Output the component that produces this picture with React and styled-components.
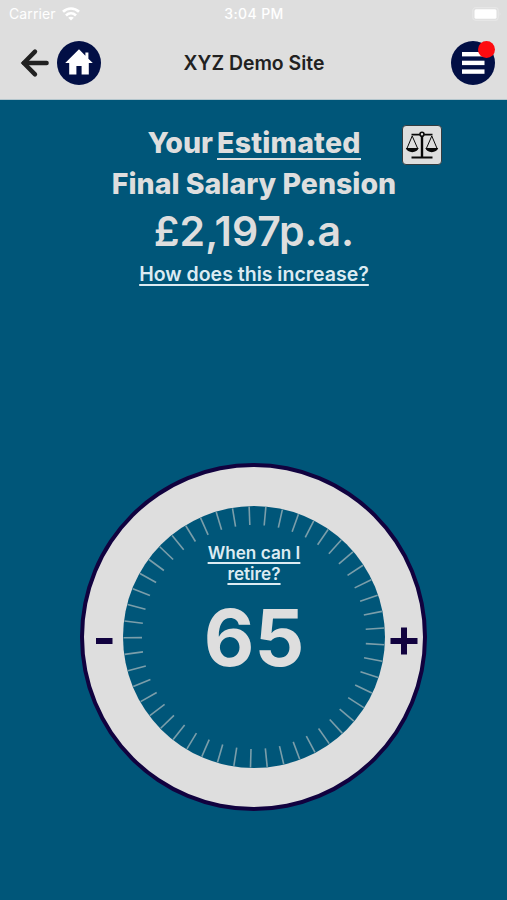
import React from 'react';
import styled, { createGlobalStyle } from 'styled-components';

const GlobalStyle = createGlobalStyle`
  body {
    margin: 0;
    background: #005679;
  }
  * {
    box-sizing: border-box;
  }
`;

const Screen = styled.div`
  display: flex;
  flex-direction: column;
  width: 507px;
  height: 900px;
  overflow: hidden;
  background: #005679;
  color: #dedede;
  font-family: Inter, 'Liberation Sans', sans-serif;
`;

const Header = styled.header`
  height: 100px;
  background: #dedede;
  border-bottom: 1px solid #b4c6cd;
`;

const StatusBar = styled.div`
  display: grid;
  grid-template-columns: 1fr auto 1fr;
  align-items: center;
  height: 27px;
  padding: 0 5px 0 9px;
  color: #fff;
  font-size: 14px;
`;

const Carrier = styled.div`
  display: flex;
  align-items: center;
  gap: 6px;
  letter-spacing: 0.1px;
`;

const Clock = styled.div`
  margin-right: 3px;
  font-weight: 500;
  font-size: 14px;
  letter-spacing: 0.4px;
`;

const Battery = styled.div`
  justify-self: end;
  height: 14px;
`;

const NavBar = styled.div`
  display: grid;
  grid-template-columns: 1fr auto 1fr;
  align-items: center;
  height: 72px;
  padding: 0 12px 0 13px;
`;

const NavLeft = styled.div`
  display: flex;
  align-items: center;
  gap: 7px;
  height: 44px;
  padding-left: 7px;
`;

const SiteTitle = styled.h1`
  margin: 0;
  color: #212121;
  font-size: 19.4px;
  font-weight: 600;
  white-space: nowrap;
`;

const RoundButton = styled.div`
  position: relative;
  display: flex;
  align-items: center;
  justify-content: center;
  width: 44px;
  height: 44px;
  border-radius: 50%;
  background: #020f45;
  justify-self: end;
`;

const Badge = styled.span`
  position: absolute;
  top: 0;
  right: 0;
  width: 17px;
  height: 17px;
  border-radius: 50%;
  background: #fe0b10;
`;

const Summary = styled.section`
  position: relative;
  display: flex;
  flex-direction: column;
  align-items: center;
  height: 363px;
  padding: 22px 0 0 1px;
`;

const Heading = styled.div`
  font-size: 28.5px;
  font-weight: 800;
  line-height: 41px;
  white-space: nowrap;
`;

const Underlined = styled.span`
  display: inline-block;
  margin-left: 4px;
  line-height: 31px;
  letter-spacing: 0.2px;
  border-bottom: 2.5px solid #dedede;
`;

const Amount = styled.div`
  font-size: 41px;
  font-weight: 600;
  line-height: 55px;
  white-space: nowrap;
`;

const Link = styled.a`
  font-size: ${props => props.$size}px;
  font-weight: 600;
  line-height: ${props => props.$line}px;
  color: #dcebf2;
  text-align: center;
  text-decoration: underline;
  text-decoration-thickness: 1.5px;
  text-underline-offset: 3px;
  text-decoration-skip-ink: none;
  white-space: nowrap;
`;

const CompareButton = styled.div`
  position: absolute;
  top: 25px;
  left: 402px;
  display: flex;
  align-items: center;
  justify-content: center;
  width: 40px;
  height: 40px;
  border: 1px solid #333c40;
  border-radius: 4px;
  background: #dedede;
`;

const Dial = styled.div`
  display: grid;
  grid-template-columns: 39px 262px 38px;
  align-items: center;
  align-self: center;
  width: 347px;
  height: 348px;
  border: 4px solid #11023f;
  border-radius: 50%;
  background: #dedede;
`;

const DialFace = styled.div`
  position: relative;
  display: flex;
  flex-direction: column;
  align-items: center;
  width: 262px;
  height: 262px;
  padding-top: 37px;
  border-radius: 50%;
  background: #005679;
`;

const Ticks = styled.svg`
  position: absolute;
  top: 0;
  left: 0;
`;

const Age = styled.div`
  margin-top: 8px;
  font-size: 78px;
  font-weight: 700;
  line-height: 92px;
`;

const Step = styled.div`
  display: flex;
  justify-content: center;
  padding-top: 7px;
`;

const TICK_COUNT = 49;

const WifiIcon = () => (
  <svg width="18" height="14" viewBox="0 0 18 14" fill="none" stroke="#fff" strokeWidth="2.7">
    <path d="M1 4.8C5.6 0.4 12.4 0.4 17 4.8" />
    <path d="M4 8.4C7 5.6 11 5.6 14 8.4" />
    <path d="M9 13.5L6.2 10.7C7.8 9.3 10.2 9.3 11.8 10.7Z" fill="#fff" stroke="none" />
  </svg>
);

const BatteryIcon = () => (
  <svg width="30" height="14" viewBox="0 0 30 14">
    <rect x="0.7" y="0.7" width="25.5" height="12.6" rx="3" fill="none" stroke="#e6e6e6" strokeWidth="1.2" />
    <rect x="2.5" y="2.2" width="22" height="9.6" rx="1.5" fill="#fff" />
    <path d="M27.7 4.8Q29.2 7 27.7 9.2Z" fill="#e9e9e9" />
  </svg>
);

const BackIcon = () => (
  <svg width="30" height="30" viewBox="0 0 30 30" fill="none" stroke="#212121" strokeWidth="4.4" strokeLinecap="round">
    <path d="M4 15H26.6" />
    <path d="M15 3.6L3.8 15L15 26.4" strokeLinejoin="miter" />
  </svg>
);

const HomeIcon = () => (
  <svg width="28" height="28" viewBox="0 0 28 28" fill="#fff">
    <path d="M14 0.2L0.2 14H4.2V25.4H11.4V17H16.6V25.4H23.8V14H27.8L23.4 9.8V3.6H20.4V6.7Z" />
  </svg>
);

const MenuIcon = () => (
  <svg width="23" height="22" viewBox="0 0 23 22" fill="#fff">
    <rect y="0" width="22.5" height="4.4" />
    <rect y="8.7" width="22.5" height="4.4" />
    <rect y="17.4" width="22.5" height="4.4" />
  </svg>
);

const ScalesIcon = () => (
  <svg width="34" height="30" viewBox="0 0 34 30" fill="none" stroke="#080808">
    <path d="M6.5 4.6H14.8M19.2 4.6H27.5" strokeWidth="1.8" />
    <circle cx="17" cy="4.2" r="2" strokeWidth="1.6" />
    <path d="M17 6.5V27.5" strokeWidth="2.4" />
    <path d="M6.5 27.5H27.5" strokeWidth="2" />
    <path d="M1.8 18.8L7.2 6L12.8 18.8M21.2 18.8L26.8 6L32.2 18.8" strokeWidth="1" />
    <path d="M0.8 18H13.6C12.5 23.5 2 23.5 0.8 18ZM20.4 18H33.2C32 23.5 21.5 23.5 20.4 18Z" fill="#080808" stroke="none" />
  </svg>
);

const MinusIcon = () => (
  <svg width="18" height="6" viewBox="0 0 18 6">
    <rect x="1" width="16.5" height="6" fill="#11023f" />
  </svg>
);

const PlusIcon = () => (
  <svg width="28" height="28" viewBox="0 0 28 28" fill="none" stroke="#11023f" strokeWidth="6">
    <path d="M0.5 14H27.5M14 0.5V27.5" />
  </svg>
);

const DialTicks = () => (
  <Ticks width="262" height="262" viewBox="0 0 262 262">
    {Array.from({ length: TICK_COUNT }, (_, i) => (
      <line
        key={i}
        x1="0.5"
        y1="131"
        x2="19"
        y2="131"
        stroke="#7b9eaa"
        strokeWidth="1.6"
        transform={`rotate(${(i * 360) / TICK_COUNT - 0.3} 131 131)`}
      />
    ))}
  </Ticks>
);

const App = () => (
  <Screen>
    <GlobalStyle />
    <Header>
      <StatusBar>
        <Carrier>
          Carrier
          <WifiIcon />
        </Carrier>
        <Clock>3:04 PM</Clock>
        <Battery>
          <BatteryIcon />
        </Battery>
      </StatusBar>
      <NavBar>
        <NavLeft>
          <BackIcon />
          <RoundButton>
            <HomeIcon />
          </RoundButton>
        </NavLeft>
        <SiteTitle>XYZ Demo Site</SiteTitle>
        <RoundButton>
          <MenuIcon />
          <Badge />
        </RoundButton>
      </NavBar>
    </Header>
    <Summary>
      <Heading>
        Your<Underlined>Estimated</Underlined>
      </Heading>
      <Heading>Final Salary Pension</Heading>
      <Amount>£2,197p.a.</Amount>
      <Link $size={19.5} $line={31}>How does this increase?</Link>
      <CompareButton>
        <ScalesIcon />
      </CompareButton>
    </Summary>
    <Dial>
      <Step>
        <MinusIcon />
      </Step>
      <DialFace>
        <DialTicks />
        <Link $size={17.2} $line={20.5}>
          When can I
          <br />
          retire?
        </Link>
        <Age>65</Age>
      </DialFace>
      <Step>
        <PlusIcon />
      </Step>
    </Dial>
  </Screen>
);

export default App;
